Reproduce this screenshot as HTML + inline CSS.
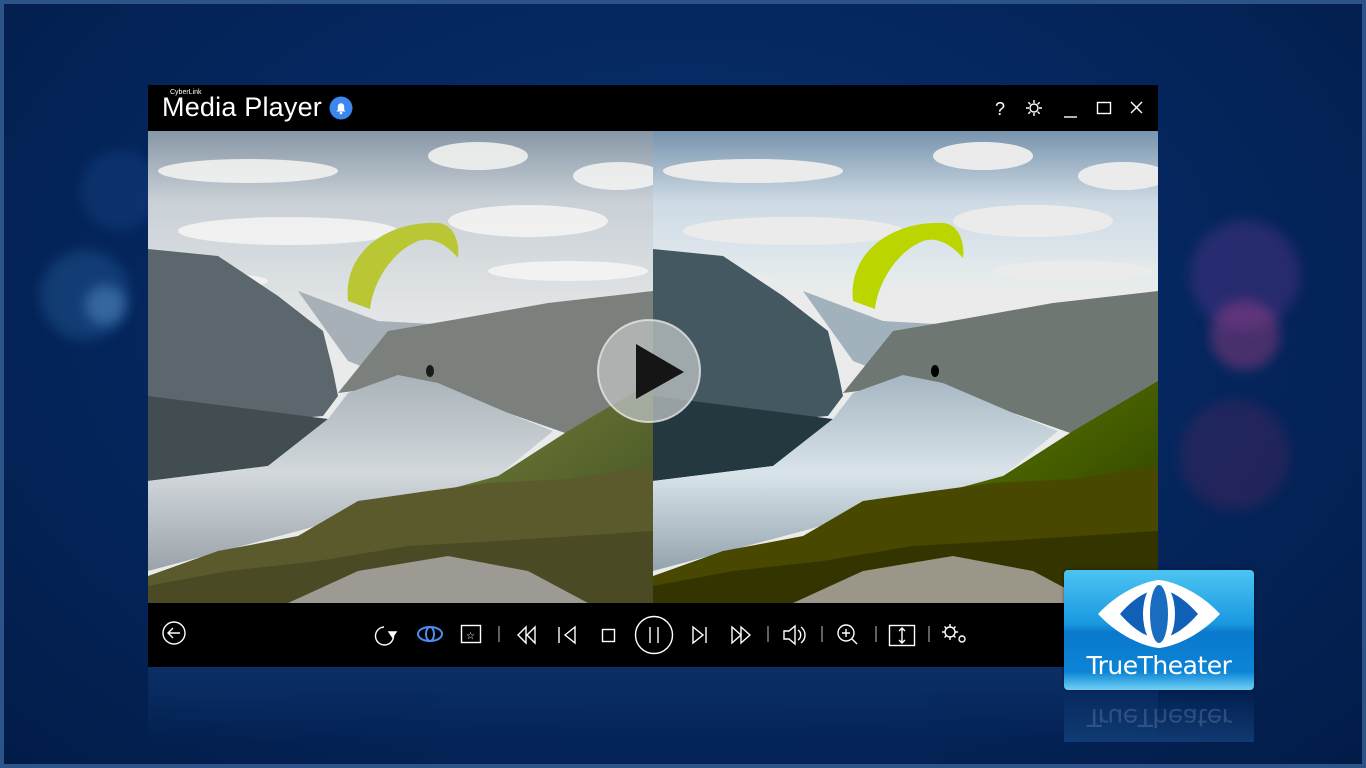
<!DOCTYPE html>
<html><head><meta charset="utf-8"><style>
*{margin:0;padding:0;box-sizing:border-box}
body{width:1366px;height:768px;overflow:hidden;background:#03214f;font-family:"Liberation Sans",sans-serif;position:relative}
.bg{position:absolute;inset:0;background:radial-gradient(ellipse at 50% 40%,#0a3170 0%,#052760 50%,#021c48 100%);border:4px solid #2c5488}
.bokeh{position:absolute;border-radius:50%;filter:blur(6px)}
.win{position:absolute;left:148px;top:85px;width:1010px;height:582px;background:#000}
.title{position:absolute;left:14px;top:7px;color:#fff;font-size:27px;letter-spacing:0.2px;font-family:"Liberation Sans",sans-serif}
.cl{position:absolute;left:22px;top:4px;color:#fff;font-size:7px}
.vid{position:absolute;top:46px;width:505px;height:472px;overflow:hidden}
.ctrl{position:absolute;left:0;top:518px;width:1010px;height:64px}
.refl{position:absolute;left:148px;top:667px;width:1010px;height:75px;background:linear-gradient(#0b2f66,rgba(5,39,96,0))}
.badge{position:absolute;left:1064px;top:570px;width:190px;height:120px;border-radius:4px;background:linear-gradient(#4cc4f2 0%,#1a98e0 45%,#0a78cc 52%,#0c85d6 85%,#6fd0f4 100%);box-shadow:0 0 3px rgba(0,0,0,.5)}
.badge span{position:absolute;left:0;right:0;top:81px;text-align:center;color:#fff;font-size:25px;font-family:"DejaVu Sans",sans-serif;letter-spacing:-0.5px}
.brefl{position:absolute;left:1064px;top:692px;width:190px;height:50px;background:linear-gradient(rgba(40,110,180,.35),rgba(0,0,0,0));color:rgba(150,180,220,.25);font-size:25px;text-align:center;font-family:"DejaVu Sans",sans-serif;transform:scaleY(-1);line-height:50px;letter-spacing:-0.5px}
</style></head><body>
<div class="bg"></div>
<div class="bokeh" style="left:40px;top:250px;width:90px;height:90px;background:rgba(60,130,200,.25)"></div>
<div class="bokeh" style="left:85px;top:285px;width:40px;height:40px;background:rgba(120,180,230,.35)"></div>
<div class="bokeh" style="left:80px;top:150px;width:80px;height:80px;background:rgba(40,100,180,.2)"></div>
<div class="bokeh" style="left:1190px;top:220px;width:110px;height:110px;background:rgba(120,60,160,.3)"></div>
<div class="bokeh" style="left:1210px;top:300px;width:70px;height:70px;background:rgba(200,70,140,.35)"></div>
<div class="bokeh" style="left:1180px;top:400px;width:110px;height:110px;background:rgba(120,40,100,.25)"></div>
<div class="refl"></div>
<div class="win">
 <div class="cl">CyberLink</div>
 <div class="title">Media Player</div>
 <svg style="position:absolute;left:181px;top:11px" width="24" height="24"><circle cx="12" cy="12" r="11.5" fill="#3b86ef"/><path d="M7.5 15.5h9l-1.3-1.6v-3.5a3.2 3.2 0 0 0-6.4 0v3.5z" fill="#fff"/><circle cx="12" cy="17" r="1.3" fill="#fff"/></svg>
 <svg style="position:absolute;left:840px;top:10px" width="170" height="26" fill="none" stroke="#fff" stroke-width="1.4">
  <text x="7" y="20" fill="#fff" stroke="none" font-size="18" font-family="Liberation Sans">?</text>
  <circle cx="46" cy="13" r="4"/><path d="M46 5v3M46 18v3M38 13h3M51 13h3M40.3 7.3l2.1 2.1M49.6 16.6l2.1 2.1M40.3 18.7l2.1-2.1M49.6 9.4l2.1-2.1"/>
  <path d="M76 22h13"/><rect x="109.5" y="7.5" width="13" height="11"/><path d="M143 7l11 11M154 7l-11 11"/>
 </svg>
 <div class="vid" style="left:0">
  <svg width="505" height="472" id="s1" viewBox="0 0 505 472">
   <defs>
    <linearGradient id="sky" x1="0" y1="0" x2="0" y2="1"><stop offset="0" stop-color="#8797a6"/><stop offset=".15" stop-color="#c9d0d6"/><stop offset=".45" stop-color="#e9ebea"/></linearGradient>
    <linearGradient id="lake" x1="0" y1="0" x2="0" y2="1"><stop offset="0" stop-color="#a9b3b9"/><stop offset=".5" stop-color="#d2d8dc"/><stop offset="1" stop-color="#9aa3a9"/></linearGradient>
    <linearGradient id="slope" x1="0" y1="0" x2="1" y2="1"><stop offset="0" stop-color="#7a8a3c"/><stop offset="1" stop-color="#3e4a22"/></linearGradient>
   </defs>
   <rect width="505" height="472" fill="url(#sky)"/>
   <g fill="#f6f6f4" opacity=".85"><ellipse cx="100" cy="40" rx="90" ry="12"/><ellipse cx="330" cy="25" rx="50" ry="14"/><ellipse cx="380" cy="90" rx="80" ry="16"/><ellipse cx="470" cy="45" rx="45" ry="14"/><ellipse cx="140" cy="100" rx="110" ry="14"/><ellipse cx="420" cy="140" rx="80" ry="10"/><ellipse cx="60" cy="150" rx="60" ry="8"/></g>
   <path d="M150 160L230 190 320 195 300 240 250 250 200 230Z" fill="#a6b0b6"/>
   <path d="M0 118L70 125 130 165 175 200 185 240 190 265 175 285 0 300Z" fill="#5b676c"/>
   <path d="M190 262L240 200 310 188 400 172 505 160 505 290 440 310 360 282 270 252Z" fill="#7b807d"/>
   <path d="M0 265L180 288 120 335 0 350Z" fill="#424d52"/>
   <path d="M0 350L120 335 180 288 200 262 250 244 290 252 360 282 405 300 350 345 250 372 150 400 0 440Z" fill="url(#lake)"/>
   <path d="M250 372L350 345 420 300 505 250 505 472 200 472Z" fill="url(#slope)"/>
   <path d="M0 472L0 445 70 420 150 405 210 370 280 360 340 352 420 348 505 335 505 472Z" fill="#5a5a2c"/>
   <path d="M0 472L0 455 80 440 170 430 260 415 350 410 505 400 505 472Z" fill="#4a4a24"/>
   <path d="M140 472L210 440 300 425 380 440 440 472Z" fill="#9c9a92"/>
   <path d="M200 170C195 120 240 90 290 92 305 93 312 110 310 127 300 115 285 105 270 110 245 120 225 150 222 178Z" fill="#b8c733"/>
   <ellipse cx="282" cy="240" rx="4" ry="6" fill="#1a1a1a"/>
  </svg>
 </div>
 <div class="vid" style="left:505px;filter:contrast(1.35) saturate(1.4) brightness(.92)">
  <svg width="505" height="472"><use href="#s1"/></svg>
 </div>
 <svg style="position:absolute;left:448px;top:233px" width="106" height="106"><circle cx="53" cy="53" r="51" fill="rgba(190,195,195,.75)" stroke="rgba(230,230,230,.8)" stroke-width="2"/><path d="M40 26L40 81 88 54Z" fill="#151515"/></svg>
 <svg class="ctrl" width="1010" height="64" fill="none" stroke="#fff" stroke-width="1.4">
  <circle cx="26" cy="30" r="11"/><path d="M32 30H20M25 25l-5 5 5 5"/>
  <path d="M236 24a9 9 0 1 0 9 6"/><path d="M241 29h7l-3.5 5z" fill="#fff"/>
  <ellipse cx="282" cy="31" rx="12" ry="7" stroke="#4a8ff0" stroke-width="2"/><ellipse cx="282" cy="31" rx="4" ry="7" stroke="#4a8ff0" stroke-width="2"/>
  <rect x="313.5" y="22.5" width="19" height="17"/><text x="318" y="36" font-size="10" fill="#fff" stroke="none">☆</text>
  <path d="M351 23v16M620 23v16M674 23v16M728 23v16M781 23v16" stroke="#888"/>
  <path d="M378 24l-8 8 8 8zM387 24l-8 8 8 8z"/>
  <path d="M411 24v16M427 24l-10 8 10 8z"/>
  <rect x="454.5" y="26.5" width="12" height="12"/>
  <circle cx="506" cy="32" r="18.5"/><path d="M502 24v16M510 24v16"/>
  <path d="M545 24l10 8-10 8zM558 24v16"/>
  <path d="M584 24l9 8-9 8zM593 24l9 8-9 8z"/>
  <path d="M636 28h5l6-5v18l-6-5h-5z"/><path d="M650 27a6 6 0 0 1 0 10M653 24a10 10 0 0 1 0 16"/>
  <circle cx="698" cy="30" r="8"/><path d="M694 30h8M698 26v8M704 36l5 5"/>
  <rect x="741.5" y="22.5" width="25" height="20"/><path d="M754 25v15M751 28l3-3 3 3M751 37l3 3 3-3"/>
  <circle cx="802" cy="29" r="5"/><path d="M802 21v3M802 34v3M794 29h3M807 29h3M796.5 23.5l2 2M805.5 32.5l2 2M796.5 34.5l2-2M805.5 25.5l2-2"/><circle cx="814" cy="36" r="3"/>
 </svg>
</div>
<div class="brefl">TrueTheater</div>
<div class="badge">
 <svg style="position:absolute;left:30px;top:8px" width="130" height="72"><path d="M4 36C30 8 60 2 65 2 70 2 100 8 126 36 100 64 70 70 65 70 60 70 30 64 4 36Z" fill="#fff"/><path d="M26 36C40 20 52 14 58 13 50 24 48 48 58 59 52 58 40 52 26 36Z" fill="#1060b8"/><path d="M104 36C90 20 78 14 72 13 80 24 82 48 72 59 78 58 90 52 104 36Z" fill="#1060b8"/><ellipse cx="65" cy="36" rx="16" ry="32" fill="#fff"/><ellipse cx="65" cy="36" rx="9" ry="29" fill="#1a6cc0"/></svg>
 <span>TrueTheater</span>
</div>
</body></html>
